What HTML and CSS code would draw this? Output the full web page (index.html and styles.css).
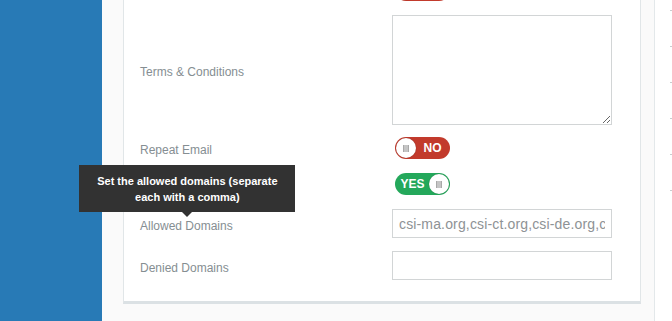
FILE: index.html
```html
<!DOCTYPE html>
<html lang="en">
<head>
  <meta charset="UTF-8">
  <title>Form Settings</title>
  <link rel="stylesheet" href="styles.css">
</head>
<body>

  <div class="layout">
    <aside class="sidebar"></aside>

    <main class="content">
      <div class="card">
        <form class="settings">

          <div class="form-row row-top">
            <span class="label"></span>
            <div class="control">
              <span class="switch switch-off"><span class="knob"><i></i></span><b></b></span>
            </div>
          </div>

          <div class="form-row row-terms">
            <label class="label" for="terms">Terms &amp; Conditions</label>
            <div class="control">
              <textarea id="terms" name="terms"></textarea>
            </div>
          </div>

          <div class="form-row">
            <span class="label">Repeat Email</span>
            <div class="control">
              <span class="switch switch-off"><span class="knob"><i></i></span><b>NO</b></span>
            </div>
          </div>

          <div class="form-row">
            <span class="label">Notify on Completion</span>
            <div class="control">
              <span class="switch switch-on"><b>YES</b><span class="knob"><i></i></span></span>
            </div>
          </div>

          <div class="form-row row-input">
            <label class="label" for="allowed">
              <span class="has-tip">Allowed Domains
                <span class="tooltip">Set the allowed domains (separate each with a comma)</span>
              </span>
            </label>
            <div class="control">
              <input type="text" id="allowed" name="allowed" value="csi-ma.org,csi-ct.org,csi-de.org,csi-ri.org">
            </div>
          </div>

          <div class="form-row row-input row-last">
            <label class="label" for="denied">Denied Domains</label>
            <div class="control">
              <input type="text" id="denied" name="denied">
            </div>
          </div>

        </form>
      </div>
    </main>

    <div class="rail">
      <span></span><span></span><span></span><span></span><span></span><span></span>
    </div>
  </div>

</body>
</html>
```

FILE: styles.css
```css
body {
  margin: 0;
  font-family: "Liberation Sans", Arial, sans-serif;
  background-color: #fafafa;
  overflow: hidden;
}

.layout {
  display: flex;
  height: 321px;
  overflow: hidden;
}

.sidebar {
  width: 102px;
  flex: 0 0 102px;
  background-color: #287ab6;
}

.content {
  width: 552px;
  flex: 0 0 552px;
  border-right: 1px solid #e3e8ea;
  background-color: #fafafa;
}

.card {
  margin-top: -21px;
  margin-left: 21px;
  width: 518px;
  box-sizing: border-box;
  background: #fff;
  border: 1px solid #e1e6e8;
  border-top: none;
  border-bottom: 3px solid #dbe1e4;
  padding: 0 28px 21px 16px;
}

.form-row {
  display: grid;
  grid-template-columns: 252px 220px;
  align-items: center;
  margin-bottom: 14px;
}

.row-terms {
  margin-bottom: 12px;
}

.row-input {
  margin-bottom: 13px;
}

.row-last {
  margin-bottom: 0;
}

.label {
  font-size: 12px;
  color: #858e92;
  line-height: 14px;
  padding-top: 4px;
}

.control {
  display: flex;
}

textarea {
  display: block;
  width: 220px;
  height: 110px;
  box-sizing: border-box;
  border: 1px solid #d2d5d6;
  border-radius: 0;
  margin: 0;
  padding: 6px;
}

input[type="text"] {
  width: 220px;
  height: 29px;
  box-sizing: border-box;
  border: 1px solid #d2d5d6;
  border-radius: 0;
  margin: 0;
  padding: 0 6px;
  font-family: "Liberation Sans", Arial, sans-serif;
  font-size: 14px;
  letter-spacing: 0.15px;
  color: #8e9295;
}

/* toggle switches */
.switch {
  display: flex;
  align-items: center;
  width: 55px;
  height: 22px;
  box-sizing: border-box;
  border-radius: 11px;
  padding: 1px;
  margin-left: 3px;
  color: #fff;
  font-size: 12px;
}

.switch b {
  flex: 1;
  text-align: center;
}

.switch-off {
  background-color: #c23a2c;
}

.switch-on {
  background-color: #24a85b;
}

.knob {
  width: 20px;
  height: 20px;
  border-radius: 50%;
  background: #fff;
  box-shadow: 0 0 1px rgba(0, 0, 0, 0.4);
  display: flex;
  align-items: center;
  justify-content: center;
}

.knob i {
  width: 4px;
  height: 7px;
  background: #c5c5c5;
  border-left: 1px solid #a9a9a9;
  border-right: 1px solid #a9a9a9;
}

/* tooltip over the allowed domains label */
.has-tip {
  position: relative;
}

.tooltip {
  position: absolute;
  bottom: 100%;
  left: 50%;
  margin-bottom: 7px;
  margin-left: 1px;
  transform: translateX(-50%);
  width: 216px;
  box-sizing: border-box;
  padding: 8px 10px 7px;
  background: #323232;
  color: #fff;
  font-size: 11px;
  font-weight: bold;
  line-height: 16px;
  text-align: center;
  z-index: 10;
}

.tooltip::after {
  content: "";
  position: absolute;
  top: 100%;
  left: 50%;
  margin-left: -5px;
  border: 5px solid transparent;
  border-top-color: #323232;
}

.rail {
  flex: 1;
  background: #fff;
  display: flex;
  flex-direction: column;
  align-items: flex-end;
  padding-top: 10px;
  gap: 35px;
}

.rail span {
  width: 2px;
  height: 1px;
  background: #c9cdcf;
}
```
